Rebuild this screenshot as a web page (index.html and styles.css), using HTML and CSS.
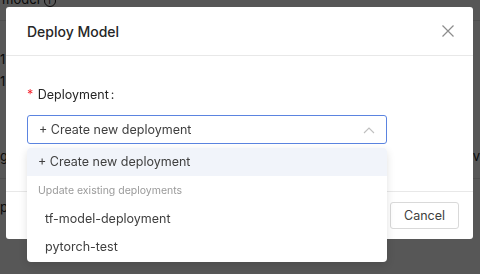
FILE: index.html
```html
<!DOCTYPE html>
<html lang="en">
<head>
    <meta charset="UTF-8">
    <meta name="viewport" content="width=device-width, initial-scale=1.0">
    <title>Deploy Model</title>
    <link rel="stylesheet" href="styles.css">
</head>
<body>
    <div class="page">
        <div class="page-title">model <span class="info">i</span></div>
        <div class="row">1</div>
        <div class="row">1</div>
        <div class="row row-wide"><span>g</span><span>v</span></div>
        <div class="row row-last">p2</div>
    </div>

    <div class="mask"></div>

    <div class="modal">
        <div class="modal-header">
            <h3>Deploy Model</h3>
            <svg class="close" width="14" height="14" viewBox="0 0 14 14">
                <path d="M1.5 1.5 L12.5 12.5 M12.5 1.5 L1.5 12.5" stroke="#8c8c8c" stroke-width="1.2" fill="none"/>
            </svg>
        </div>

        <div class="modal-body">
            <label class="label"><span class="req">*</span> Deployment<span class="colon">:</span></label>
            <div class="select">
                <span>+ Create new deployment</span>
                <svg class="arrow" width="12" height="8" viewBox="0 0 12 8">
                    <path d="M1 7 L6 2 L11 7" stroke="#bfbfbf" stroke-width="1.1" fill="none"/>
                </svg>
            </div>

            <div class="dropdown">
                <div class="option active">+ Create new deployment</div>
                <div class="group">Update existing deployments</div>
                <div class="option sub">tf-model-deployment</div>
                <div class="option sub">pytorch-test</div>
            </div>
        </div>

        <div class="modal-footer">
            <button class="btn">Cancel</button>
        </div>
    </div>
</body>
</html>
```

FILE: styles.css
```css
* {
    margin: 0;
    padding: 0;
    box-sizing: border-box;
}

body {
    font-family: Inter, 'Noto Sans', sans-serif;
    background: #fff;
    width: 480px;
    height: 274px;
    overflow: hidden;
}

/* page behind the mask */
.page {
    color: #222;
    font-size: 13px;
}

.page-title {
    margin-top: -9px;
    height: 30px;
    padding: 0 2px;
    border-bottom: 1px solid #e4e4e4;
}

.info {
    display: inline-block;
    width: 12px;
    height: 12px;
    border: 1px solid #222;
    border-radius: 50%;
    font-size: 9px;
    text-align: center;
    line-height: 10px;
}

.row {
    height: 22px;
    line-height: 22px;
}

.page-title + .row {
    margin-top: 27px;
}

.row-wide {
    display: flex;
    justify-content: space-between;
    margin-top: 51px;
    height: 36px;
    line-height: 26px;
    border-bottom: 1px solid #e4e4e4;
}

.row-last {
    margin-top: 17px;
}

.mask {
    position: fixed;
    inset: 0;
    background: rgba(0, 0, 0, 0.66);
}

.modal {
    position: fixed;
    left: 6px;
    top: 7px;
    width: 467px;
    height: 232px;
    background: white;
    border-radius: 3px;
    display: flex;
    flex-direction: column;
}

.modal-header {
    height: 49px;
    padding: 0 21px;
    display: flex;
    align-items: center;
    justify-content: space-between;
    border-bottom: 1px solid #e8e8e8;
}

.modal-header h3 {
    font-size: 14px;
    font-weight: 500;
    color: #262626;
}

.close {
    margin-right: -3px;
}

.modal-body {
    position: relative;
    flex: 1;
    padding: 29px 21px 0;
    border-bottom: 1px solid #e8e8e8;
}

.label {
    display: block;
    font-size: 12.5px;
    color: #262626;
    height: 20px;
    line-height: 20px;
    margin-bottom: 10px;
}

.req {
    color: #f5222d;
    margin-right: 1px;
}

.colon {
    margin-left: 2px;
}

.select {
    width: 360px;
    height: 29px;
    border: 1px solid #5b84e0;
    border-radius: 3px;
    padding: 0 11px;
    display: flex;
    align-items: center;
    justify-content: space-between;
    font-size: 12.5px;
    color: #404040;
}

.dropdown {
    position: absolute;
    left: 21px;
    top: 92px;
    width: 360px;
    background: white;
    border-radius: 4px;
    box-shadow: 0 3px 8px rgba(0, 0, 0, 0.12);
    overflow: hidden;
    z-index: 2;
}

.option {
    height: 28px;
    line-height: 28px;
    padding: 0 11px;
    font-size: 12.5px;
    color: #404040;
}

.option.active {
    background: #f1f4fa;
}

.option.sub {
    padding-left: 18px;
}

.option.sub:last-child {
    height: 29px;
}

.group {
    height: 29px;
    line-height: 29px;
    padding: 0 11px;
    font-size: 10.5px;
    color: #9a9a9a;
}

.modal-footer {
    height: 47px;
    padding: 0 14px;
    display: flex;
    align-items: center;
    justify-content: flex-end;
}

.btn {
    font-family: inherit;
    font-size: 12.5px;
    color: #404040;
    background: white;
    border: 1px solid #d9d9d9;
    border-radius: 3px;
    height: 27px;
    width: 69px;
}
```
